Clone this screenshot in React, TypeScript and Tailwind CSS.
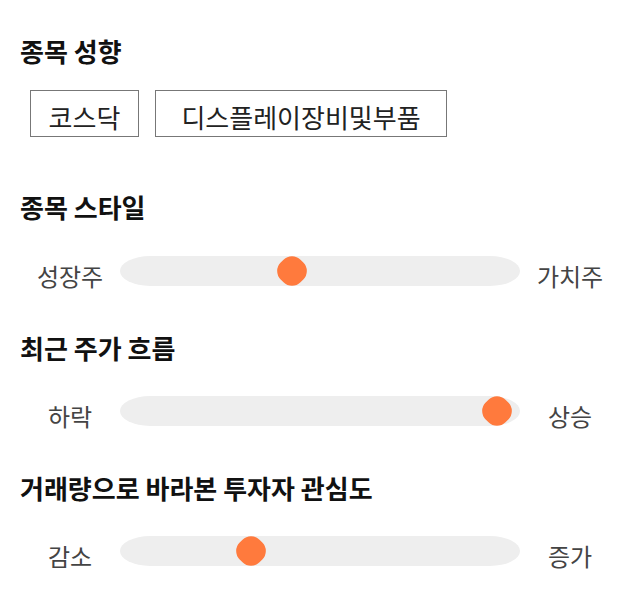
import React from "react";

const font = { fontFamily: '"Noto Sans CJK KR", "Noto Sans", sans-serif' };

function Title({ children, className = "" }: { children: React.ReactNode; className?: string }) {
  return (
    <h2 className={`px-5 text-[26px] leading-[34px] font-bold text-[#111] ${className}`}>{children}</h2>
  );
}

function Slider({ left, right, pos, className = "" }: { left: string; right: string; pos: number; className?: string }) {
  return (
    <div className={`flex items-center px-5 h-[30px] ${className}`}>
      <div className="w-[100px] text-center text-[24px] leading-[30px] text-[#444] pt-[9px]">{left}</div>
      <div className="relative flex-1 h-[30px] bg-[#eeeeee] rounded-[30px/15px]">
        <div
          className="absolute top-1/2 w-[28px] h-[28px] rounded-[12px] bg-[#ff7a3d] -translate-x-1/2 -translate-y-1/2 rotate-45"
          style={{ left: `${pos}px` }}
        />
      </div>
      <div className="w-[100px] text-center text-[24px] leading-[30px] text-[#444] pt-[9px]">{right}</div>
    </div>
  );
}

export default function App() {
  return (
    <div className="w-[640px] h-[606px] bg-white overflow-hidden pt-[34px]" style={font}>
      <Title>종목 성향</Title>
      <div className="flex gap-4 ml-[30px] mt-[22px]">
        <div className="w-[109px] h-[47px] border border-[#777] flex items-center justify-center text-[26px] text-[#222] pt-[6px]">
          코스닥
        </div>
        <div className="w-[292px] h-[47px] border border-[#777] flex items-center justify-center text-[26px] text-[#222] pt-[6px]">
          디스플레이장비및부품
        </div>
      </div>
      <Title className="mt-[53px]">종목 스타일</Title>
      <Slider left="성장주" right="가치주" pos={172} className="mt-[32px]" />
      <Title className="mt-[45px]">최근 주가 흐름</Title>
      <Slider left="하락" right="상승" pos={377} className="mt-[31px]" />
      <Title className="mt-[45px]">거래량으로 바라본 투자자 관심도</Title>
      <Slider left="감소" right="증가" pos={131} className="mt-[31px]" />
    </div>
  );
}
